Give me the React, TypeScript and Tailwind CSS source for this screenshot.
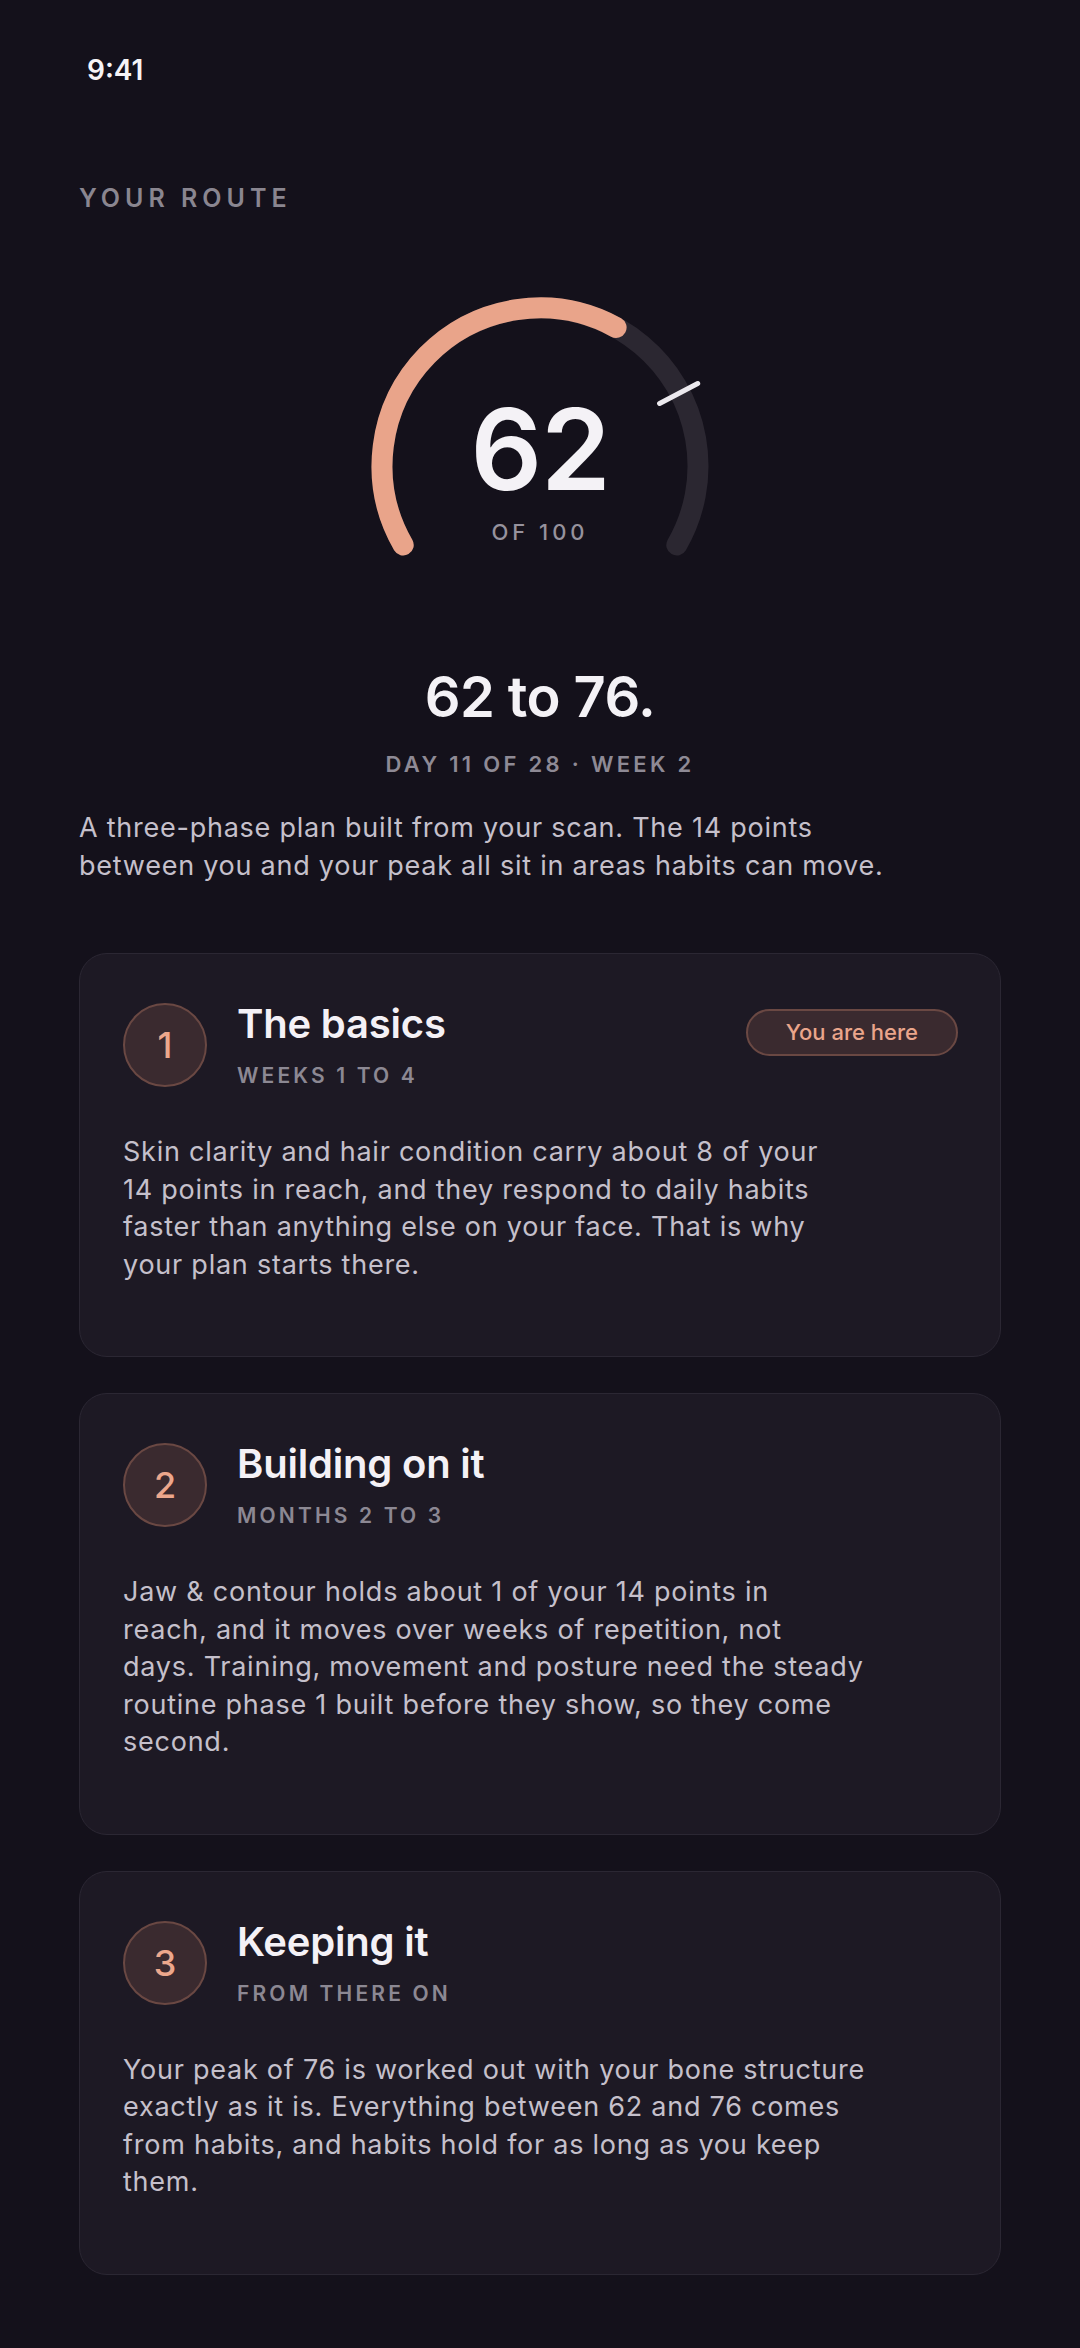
import React from "react";

type Phase = {
  n: number;
  title: string;
  span: string;
  lines: string[];
  current?: boolean;
};

const phases: Phase[] = [
  {
    n: 1,
    title: "The basics",
    span: "Weeks 1 to 4",
    lines: [
      "Skin clarity and hair condition carry about 8 of your",
      "14 points in reach, and they respond to daily habits",
      "faster than anything else on your face. That is why",
      "your plan starts there.",
    ],
    current: true,
  },
  {
    n: 2,
    title: "Building on it",
    span: "Months 2 to 3",
    lines: [
      "Jaw & contour holds about 1 of your 14 points in",
      "reach, and it moves over weeks of repetition, not",
      "days. Training, movement and posture need the steady",
      "routine phase 1 built before they show, so they come",
      "second.",
    ],
  },
  {
    n: 3,
    title: "Keeping it",
    span: "From there on",
    lines: [
      "Your peak of 76 is worked out with your bone structure",
      "exactly as it is. Everything between 62 and 76 comes",
      "from habits, and habits hold for as long as you keep",
      "them.",
    ],
  },
];

function Gauge() {
  // 240° sweep, center (180,178), r=158
  return (
    <div className="relative mx-auto w-[360px] h-[280px]">
      <svg width="360" height="280" viewBox="0 0 360 280" fill="none">
        <path
          d="M 43.2 257 A 158 158 0 1 1 316.8 257"
          stroke="#2b2731"
          strokeWidth="21"
          strokeLinecap="round"
        />
        <path
          d="M 43.2 257 A 158 158 0 0 1 256.1 39.5"
          stroke="#e9a48a"
          strokeWidth="21"
          strokeLinecap="round"
        />
        <line
          x1="299.6"
          y1="115.5"
          x2="337.7"
          y2="95.5"
          stroke="#ece9ee"
          strokeWidth="5"
          strokeLinecap="round"
        />
      </svg>
      <div className="absolute left-0 right-0 top-[105px] text-center text-[112px] leading-[112px] font-semibold tracking-[-0.01em] text-[#f4f2f6]">
        62
      </div>
      <div className="absolute left-0 right-0 top-[230px] text-center text-[22px] leading-[28px] font-medium tracking-[0.18em] text-[#96929d]">
        OF 100
      </div>
    </div>
  );
}

function PhaseCard({ phase }: { phase: Phase }) {
  return (
    <div className="rounded-[28px] border border-[#2b2733] bg-[#1d1924] pl-[43px] pr-[42px] pt-[46px] pb-[73px]">
      {/* Header */}
      <div className="flex items-center gap-[30px]">
        <div className="w-[84px] h-[84px] shrink-0 rounded-full border-2 border-[#6a4843] bg-[#3a2a2f] flex items-center justify-center text-[36px] font-medium text-[#eca78c]">
          {phase.n}
        </div>
        <div className="flex-1 min-w-0">
          <div className="text-[40px] leading-[48px] font-semibold tracking-[-0.005em] text-[#f4f1f6]">
            {phase.title}
          </div>
          <div className="mt-[14px] text-[21px] leading-[28px] font-semibold uppercase tracking-[0.15em] text-[#8c8893]">
            {phase.span}
          </div>
        </div>
        {phase.current && (
          <div className="self-start mt-[9px] h-[47px] px-[38px] rounded-full border-2 border-[#6a4843] bg-[#3a2a2f] flex items-center text-[22px] font-medium text-[#eaa58b]">
            You are here
          </div>
        )}
      </div>

      {/* Body */}
      <p className="mt-[43px] text-[27px] leading-[37.5px] tracking-[0.028em] text-[#c5c0cb]">
        {phase.lines.map((l, i) => (
          <span key={i} className="block whitespace-nowrap">
            {l}
          </span>
        ))}
      </p>
    </div>
  );
}

export default function App() {
  return (
    <div
      className="min-h-[2348px] w-full bg-[#14111b] text-white"
      style={{ fontFamily: "Inter, 'Noto Sans', sans-serif" }}
    >
      {/* Status bar */}
      <div className="px-[87px] pt-[52px] text-[28px] leading-[36px] font-semibold text-[#f6f4f7]">
        9:41
      </div>

      <div className="px-[79px]">
        {/* Section label */}
        <div className="mt-[94px] text-[25px] leading-[32px] font-semibold tracking-[0.2em] text-[#8a8690]">
          YOUR ROUTE
        </div>

        {/* Score gauge */}
        <div className="mt-[74px]">
          <Gauge />
        </div>

        {/* Goal */}
        <div className="mt-[97px] text-center text-[56px] leading-[64px] font-semibold tracking-[-0.01em] text-[#f4f2f6]">
          62 to 76.
        </div>
        <div className="mt-[21px] text-center text-[22px] leading-[28px] font-semibold tracking-[0.15em] text-[#8e8a95]">
          DAY 11 OF 28 · WEEK 2
        </div>

        <p className="mt-[31px] text-[27px] leading-[37.5px] tracking-[0.028em] text-[#c5c0cb]">
          <span className="block whitespace-nowrap">
            A three-phase plan built from your scan. The 14 points
          </span>
          <span className="block whitespace-nowrap">
            between you and your peak all sit in areas habits can move.
          </span>
        </p>

        {/* Phases */}
        <div className="mt-[69px] flex flex-col gap-[36px] pb-[74px]">
          {phases.map((p) => (
            <PhaseCard key={p.n} phase={p} />
          ))}
        </div>
      </div>
    </div>
  );
}
